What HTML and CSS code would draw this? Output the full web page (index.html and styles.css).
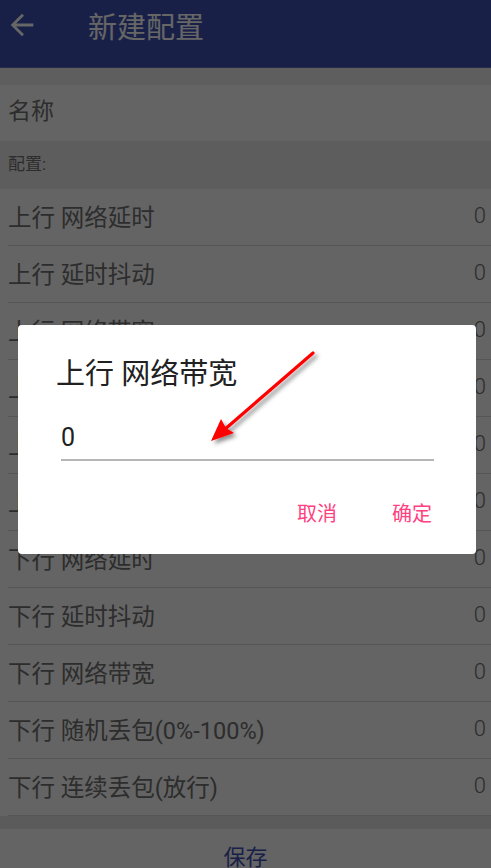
FILE: index.html
```html
<!DOCTYPE html>
<html lang="zh-CN">
<head>
    <meta charset="UTF-8">
    <meta name="viewport" content="width=device-width, initial-scale=1.0">
    <title>新建配置</title>
    <link rel="stylesheet" href="styles.css">
</head>
<body>
    <div class="toolbar">
        <svg class="back" width="34" height="34" viewBox="0 0 24 24">
            <path d="M20 11H7.83l5.59-5.59L12 4l-8 8 8 8 1.41-1.41L7.83 13H20v-2z" fill="#fff"/>
        </svg>
        <span class="toolbar-title">新建配置</span>
    </div>
    <div class="spacer"></div>
    <div class="name-row">名称</div>
    <div class="section-header">配置:</div>
    <ul class="config-list">
        <li><span>上行 网络延时</span><span class="value">0</span></li>
        <li><span>上行 延时抖动</span><span class="value">0</span></li>
        <li><span>上行 网络带宽</span><span class="value">0</span></li>
        <li><span>上行 随机丢包(0%-100%)</span><span class="value">0</span></li>
        <li><span>上行 连续丢包(丢弃)</span><span class="value">0</span></li>
        <li><span>上行 连续丢包(放行)</span><span class="value">0</span></li>
        <li><span>下行 网络延时</span><span class="value">0</span></li>
        <li><span>下行 延时抖动</span><span class="value">0</span></li>
        <li><span>下行 网络带宽</span><span class="value">0</span></li>
        <li><span>下行 随机丢包(0%-100%)</span><span class="value">0</span></li>
        <li><span>下行 连续丢包(放行)</span><span class="value">0</span></li>
    </ul>
    <div class="footer-gap"></div>
    <div class="save-bar">保存</div>

    <div class="dim"></div>
    <div class="dialog">
        <div class="dialog-title">上行 网络带宽</div>
        <div class="dialog-input">0</div>
        <div class="dialog-actions">
            <span class="action">取消</span>
            <span class="action">确定</span>
        </div>
    </div>

    <!-- red pointer drawn on top -->
    <svg class="pointer" width="491" height="868" viewBox="0 0 491 868">
        <defs>
            <filter id="shade" x="-20%" y="-20%" width="150%" height="150%">
                <feDropShadow dx="3" dy="3" stdDeviation="2" flood-color="#000" flood-opacity="0.45"/>
            </filter>
        </defs>
        <g filter="url(#shade)">
            <line x1="313" y1="353" x2="224" y2="430" stroke="#f00" stroke-width="3.2" stroke-linecap="round"/>
            <path d="M211 441 L221 419 L226 428 L234 433 Z" fill="#f00"/>
        </g>
    </svg>
</body>
</html>
```

FILE: styles.css
```css
body {
    margin: 0;
    width: 491px;
    height: 868px;
    overflow: hidden;
    position: relative;
    background: #fafafa;
    font-family: Roboto, "Noto Sans CJK SC", sans-serif;
    color: #707070;
}
.toolbar {
    background: #3f51b5;
    height: 50px;
    padding-bottom: 17px;
    display: flex;
    align-items: center;
    border-bottom: 1px solid #5c6bc0;
    box-sizing: content-box;
}
.back {
    margin-left: 5px;
    margin-top: -1px;
}
.toolbar-title {
    margin-left: 49px;
    color: #fff;
    font-size: 29px;
}
.spacer {
    height: 17px;
    background: #ececec;
}
.name-row {
    height: 56px;
    line-height: 54px;
    padding-left: 8px;
    font-size: 23px;
    background: #fafafa;
}
.section-header {
    height: 48px;
    line-height: 46px;
    padding-left: 8px;
    font-size: 17px;
    background: #e8e8e8;
}
.config-list {
    list-style: none;
    margin: 0;
    padding: 0;
}
.config-list li {
    height: 56px;
    margin-left: 8px;
    padding-right: 5px;
    padding-bottom: 3px;
    box-sizing: border-box;
    border-bottom: 1px solid #d6d6d6;
    display: flex;
    align-items: center;
    justify-content: space-between;
    font-size: 23.5px;
}
.config-list li {
    height: 57px;
}
.value {
    font-size: 22px;
    font-weight: 300;
}
.footer-gap {
    height: 13px;
    background: #e4e4e4;
}
.save-bar {
    height: 58px;
    line-height: 58px;
    text-align: center;
    font-size: 22px;
    color: #3f51b5;
}
.dim {
    position: absolute;
    inset: 0;
    background: rgba(0, 0, 0, 0.6);
}
.dialog {
    position: absolute;
    left: 18px;
    top: 325px;
    width: 458px;
    height: 229px;
    background: #fff;
    border-radius: 4px;
    box-sizing: border-box;
    padding: 29px 42px 0 38px;
    color: #212121;
}
.dialog-title {
    font-size: 29px;
    line-height: 40px;
}
.dialog-input {
    margin: 26px 0 0 5px;
    height: 39px;
    line-height: 36px;
    font-size: 25px;
    border-bottom: 2px solid #b5b5b5;
}
.dialog-actions {
    display: flex;
    justify-content: flex-end;
    gap: 55px;
    margin-top: 38px;
    padding-right: 2px;
}
.action {
    color: #ff4081;
    font-size: 20px;
    line-height: 30px;
}
.pointer {
    position: absolute;
    left: 0;
    top: 0;
}
```
